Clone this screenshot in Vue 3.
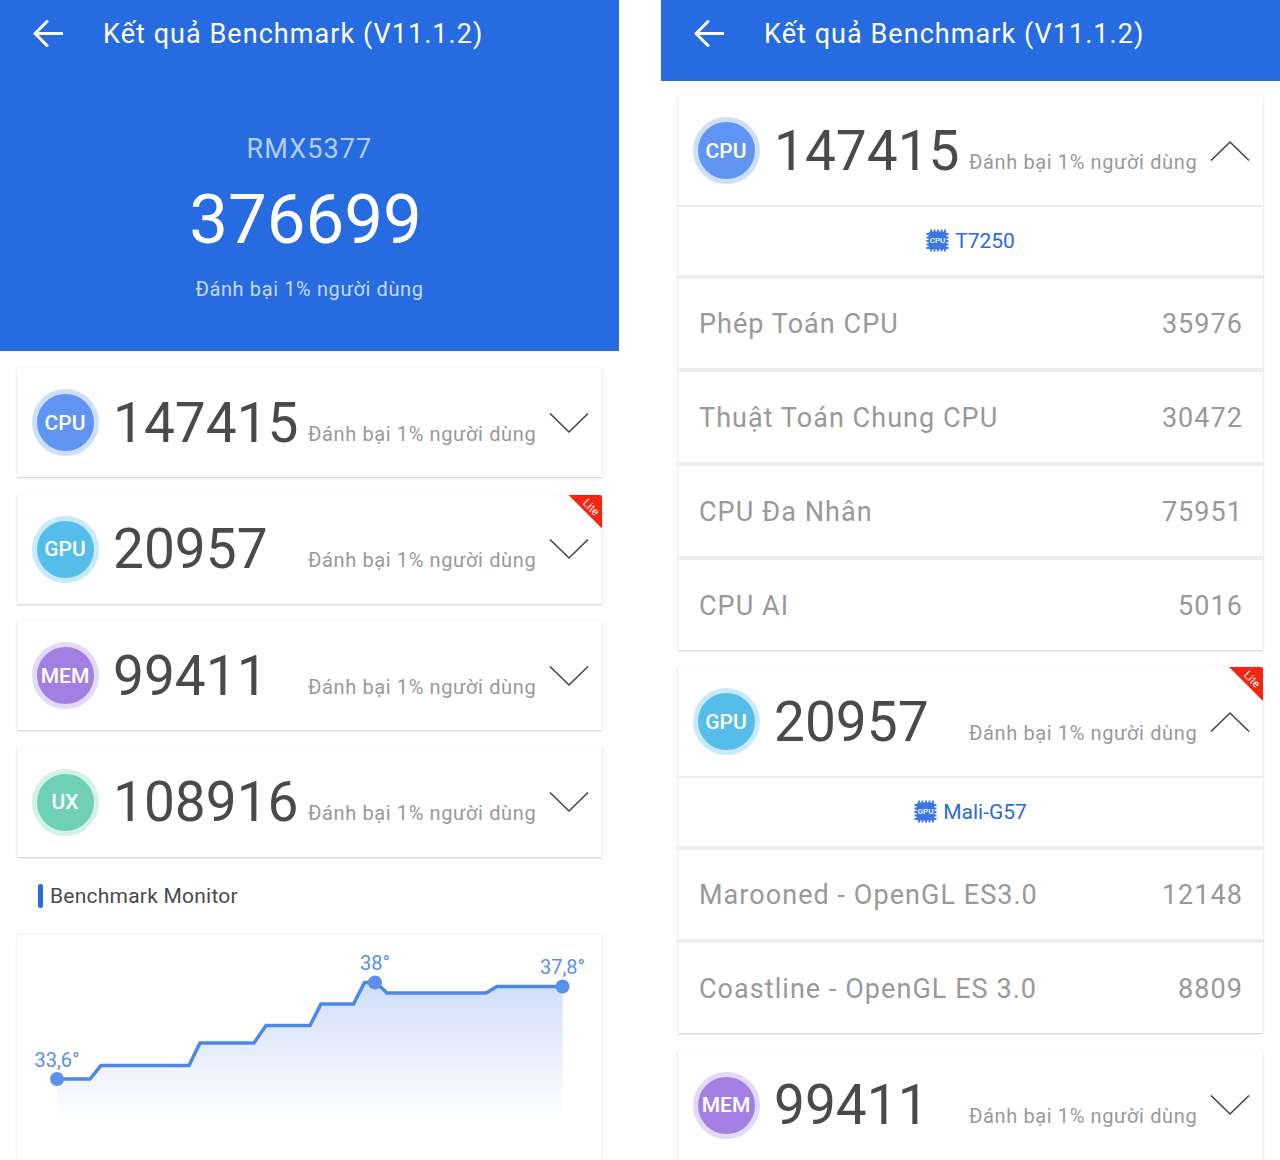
<script setup>
const scores = [
  { key: 'CPU', value: 147415, tone: 'cpu' },
  { key: 'GPU', value: 20957, tone: 'gpu', lite: true },
  { key: 'MEM', value: 99411, tone: 'mem' },
  { key: 'UX', value: 108916, tone: 'ux' },
];

const details = [
  {
    key: 'CPU', value: 147415, tone: 'cpu', chip: 'T7250', chipLabel: 'CPU', open: true,
    rows: [
      { name: 'Phép Toán CPU', value: 35976 },
      { name: 'Thuật Toán Chung CPU', value: 30472 },
      { name: 'CPU Đa Nhân', value: 75951 },
      { name: 'CPU AI', value: 5016 },
    ],
  },
  {
    key: 'GPU', value: 20957, tone: 'gpu', chip: 'Mali-G57', chipLabel: 'GPU', open: true, lite: true,
    rows: [
      { name: 'Marooned - OpenGL ES3.0', value: 12148 },
      { name: 'Coastline - OpenGL ES 3.0', value: 8809 },
    ],
  },
  { key: 'MEM', value: 99411, tone: 'mem', rows: [] },
];

const beat = 'Đánh bại 1% người dùng';
const title = 'Kết quả Benchmark (V11.1.2)';

// chart coordinates, origin at the chart card's top left corner
const top = 935;
const left = 17;
const temps = [
  [57, 1079], [90, 1079], [101, 1065.5], [189, 1065.5], [200, 1043], [254, 1043],
  [266, 1025.5], [310, 1025.5], [321, 1004], [353.5, 1004], [364.5, 982.5], [376, 982.5],
  [387, 993], [486, 993], [497, 986.5], [562.5, 986.5],
].map(([x, y]) => [x - left, y - top]);

const linePoints = temps.map((p) => p.join(',')).join(' ');
const areaPoints = `${linePoints} ${562.5 - left},${1122 - top} ${57 - left},${1122 - top}`;
const marks = [
  { x: 40, y: 144, label: '33,6°', ly: 132 },
  { x: 358, y: 47.5, label: '38°', ly: 35 },
  { x: 545.5, y: 51.5, label: '37,8°', ly: 39 },
];
</script>

<template>
  <div class="screens">
    <section class="phone">
      <div class="hero">
        <div class="topbar">
          <svg class="back" width="30" height="30" viewBox="0 0 30 30">
            <path d="M2 14.5H29M14 2.5L2 14.5L14 26.5" fill="none" stroke="#fff" stroke-width="3" stroke-linecap="round" stroke-linejoin="round" />
          </svg>
          <span class="title">{{ title }}</span>
        </div>
        <p class="model">RMX5377</p>
        <p class="total">376699</p>
        <p class="hero-beat">{{ beat }}</p>
      </div>

      <div class="cards summary">
        <article v-for="item in scores" :key="item.key" class="card">
          <div class="head">
            <div :class="['badge', item.tone]"><span>{{ item.key }}</span></div>
            <div class="figures">
              <span class="score">{{ item.value }}</span>
              <span class="beat">{{ beat }}</span>
            </div>
            <svg class="chevron" width="40" height="22" viewBox="0 0 40 22">
              <path d="M1 1.5L20 20L39 1.5" fill="none" stroke="#444" stroke-width="1.6" />
            </svg>
          </div>
          <div v-if="item.lite" class="ribbon"><span>Lite</span></div>
        </article>
      </div>

      <div class="monitor-title"><i></i>Benchmark Monitor</div>
      <div class="chart">
        <svg width="585" height="225" viewBox="0 0 585 225">
          <defs>
            <linearGradient id="area" x1="0" y1="0" x2="0" y2="1">
              <stop offset="0" stop-color="#cfdef8" />
              <stop offset="1" stop-color="#ffffff" />
            </linearGradient>
          </defs>
          <polygon :points="areaPoints" fill="url(#area)" />
          <polyline :points="linePoints" fill="none" stroke="#4d88e8" stroke-width="3.5" />
          <g v-for="m in marks" :key="m.label">
            <circle :cx="m.x" :cy="m.y" r="7" fill="#5a90ea" />
            <text :x="m.x" :y="m.ly" class="temp" text-anchor="middle">{{ m.label }}</text>
          </g>
        </svg>
      </div>
    </section>

    <section class="phone">
      <div class="bar">
        <div class="topbar">
          <svg class="back" width="30" height="30" viewBox="0 0 30 30">
            <path d="M2 14.5H29M14 2.5L2 14.5L14 26.5" fill="none" stroke="#fff" stroke-width="3" stroke-linecap="round" stroke-linejoin="round" />
          </svg>
          <span class="title">{{ title }}</span>
        </div>
      </div>

      <div class="cards detail">
        <article v-for="item in details" :key="item.key" class="card">
          <div class="head">
            <div :class="['badge', item.tone]"><span>{{ item.key }}</span></div>
            <div class="figures">
              <span class="score">{{ item.value }}</span>
              <span class="beat">{{ beat }}</span>
            </div>
            <svg :class="['chevron', { up: item.open }]" width="40" height="22" viewBox="0 0 40 22">
              <path d="M1 1.5L20 20L39 1.5" fill="none" stroke="#444" stroke-width="1.6" />
            </svg>
          </div>
          <div v-if="item.lite" class="ribbon"><span>Lite</span></div>
          <template v-if="item.open">
            <div class="chip-row">
              <span class="chip-icon">
                <svg width="23" height="23" viewBox="0 0 23 23">
                  <path d="M5 0.5v22M8.5 0.5v22M12 0.5v22M15.5 0.5v22M19 0.5v22M0.5 5h22M0.5 8.5h22M0.5 12h22M0.5 15.5h22M0.5 19h22" stroke="#3c76e4" stroke-width="1.8" />
                  <rect x="2.5" y="2.5" width="18" height="18" rx="3" fill="#3c76e4" />
                  <text x="11.5" y="14.4" class="chip-label" text-anchor="middle">{{ item.chipLabel }}</text>
                </svg>
              </span>
              <span class="chip-name">{{ item.chip }}</span>
            </div>
            <div v-for="row in item.rows" :key="row.name" class="row">
              <span>{{ row.name }}</span>
              <span>{{ row.value }}</span>
            </div>
          </template>
        </article>
      </div>
    </section>
  </div>
</template>

<style>
html, body {
  margin: 0;
  background: #fff;
}
</style>

<style scoped>
.screens {
  width: 1280px;
  height: 1160px;
  overflow: hidden;
  display: flex;
  gap: 42px;
  background: #fff;
  font-family: Roboto, "Liberation Sans", sans-serif;
  color: #444;
}

.phone {
  width: 619px;
  flex: none;
}

.hero {
  height: 351px;
  background: #266be0;
  display: flex;
  flex-direction: column;
  align-items: center;
}

.bar {
  height: 81px;
  background: #266be0;
}

.topbar {
  align-self: stretch;
  height: 67px;
  display: flex;
  align-items: center;
  padding-left: 33px;
}

.back {
  flex: none;
}

.title {
  margin-left: 40px;
  font-size: 27px;
  letter-spacing: 1.05px;
  color: #fff;
}

.model {
  margin: 65px 0 0;
  font-size: 27px;
  line-height: 34px;
  letter-spacing: 1.1px;
  color: #b5cef7;
}

.total {
  margin: 14px 8px 0 0;
  font-size: 69px;
  line-height: 80px;
  color: #fff;
}

.hero-beat {
  margin: 17px 0 0;
  font-size: 20px;
  line-height: 24px;
  letter-spacing: 0.62px;
  color: #c6daf9;
}

.cards {
  padding: 17px 17px 0;
  display: flex;
  flex-direction: column;
  gap: 17.5px;
}

.detail {
  padding-top: 15px;
}

.card {
  position: relative;
  background: #fff;
  box-shadow: 0 1px 2px rgba(0, 0, 0, 0.18), 0 0 2px rgba(0, 0, 0, 0.06);
}

.head {
  height: 109px;
  box-sizing: border-box;
  padding-left: 14.5px;
  display: flex;
  align-items: center;
}

.badge {
  flex: none;
  width: 57px;
  height: 57px;
  border: 5px solid;
  border-radius: 50%;
  display: flex;
  align-items: center;
  justify-content: center;
  color: #fff;
  font-size: 21px;
  font-weight: 500;
}

.cpu {
  background: #5f94f2;
  border-color: #cfdffb;
}

.gpu {
  background: #55bde9;
  border-color: #c9ebf9;
}

.mem {
  background: #a47fe3;
  border-color: #e4d9f7;
}

.ux {
  background: #6fd0b6;
  border-color: #d3f1e9;
}

.figures {
  flex: 1;
  display: flex;
  align-items: baseline;
  margin-left: 14.5px;
}

.score {
  width: 195px;
  flex: none;
  font-size: 55px;
  line-height: 64px;
  color: #4a4a4a;
}

.beat {
  font-size: 20px;
  letter-spacing: 0.62px;
  color: #999;
  position: relative;
  top: -1px;
}

.chevron {
  flex: none;
  margin: 0 13px 0 0;
}

.chevron.up {
  transform: scaleY(-1);
}

.ribbon {
  position: absolute;
  top: 0;
  right: 0;
  width: 34px;
  height: 34px;
  border-top-right-radius: 2px;
  background: #f5260f;
  clip-path: polygon(0 0, 100% 0, 100% 100%);
}

.ribbon span {
  position: absolute;
  top: 6px;
  right: 2px;
  font-size: 11px;
  color: #fff;
  transform: rotate(45deg);
}

.chip-row {
  height: 67.5px;
  border-top: 2px solid #eee;
  display: flex;
  align-items: center;
  justify-content: center;
  gap: 6px;
}

.chip-icon {
  display: flex;
}

.chip-label {
  font-size: 8px;
  font-weight: 500;
  fill: #fff;
}

.chip-name {
  font-size: 21px;
  color: #2a6ae0;
}

.row {
  height: 87.75px;
  border-top: 4px solid #eee;
  display: flex;
  align-items: center;
  justify-content: space-between;
  padding: 2px 20px 0 21px;
  font-size: 27px;
  letter-spacing: 1.05px;
  color: #999;
}

.monitor-title {
  margin: 27.5px 0 0 38px;
  height: 24px;
  display: flex;
  align-items: center;
  font-size: 21px;
  letter-spacing: 0.23px;
  color: #4a4a4a;
}

.monitor-title i {
  width: 5px;
  height: 24px;
  margin-right: 7px;
  border-radius: 2px;
  background: #266be0;
}

.chart {
  margin: 26.5px 17px 0;
  height: 225px;
  box-shadow: 0 0 2px rgba(0, 0, 0, 0.16);
}

.temp {
  font-size: 20px;
  fill: #5a90ea;
}
</style>
